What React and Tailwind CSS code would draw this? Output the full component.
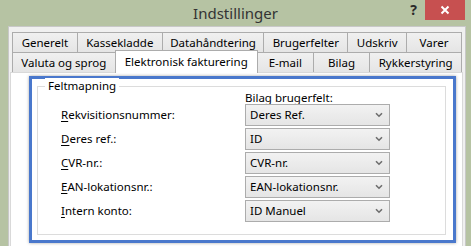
import React from 'react';

const font = { fontFamily: '"Noto Sans", "Open Sans", sans-serif' };

const row1 = [
  { label: 'Generelt', w: 'w-[66px]' },
  { label: 'Kassekladde', w: 'w-[86px]' },
  { label: 'Datahåndtering', w: 'w-[103px]' },
  { label: 'Brugerfelter', w: 'w-[85px]' },
  { label: 'Udskriv', w: 'w-[60px]' },
  { label: 'Varer', w: 'w-[56px]' },
];

const fields = [
  { key: 'R', rest: 'ekvisitionsnummer:', value: 'Deres Ref.' },
  { key: 'D', rest: 'eres ref.:', value: 'ID' },
  { key: 'C', rest: 'VR-nr.:', value: 'CVR-nr.' },
  { key: 'E', rest: 'AN-lokationsnr.:', value: 'EAN-lokationsnr.' },
  { key: 'I', rest: 'ntern konto:', value: 'ID Manuel' },
];

const Tab = ({ label, w }) => (
  <div
    className={`${w} h-[20px] -ml-px first:ml-0 border border-b-0 border-[#acacac] bg-gradient-to-b from-[#f0f0f0] to-[#e5e5e5] flex items-center justify-center text-[11.5px] text-black`}
  >
    {label}
  </div>
);

const Select = ({ value }) => (
  <div className="h-[22px] w-[145px] border border-[#acacac] bg-gradient-to-b from-[#f2f2f2] to-[#e5e5e5] flex items-center justify-between pl-[4px] pr-[6px] text-[11.5px] text-black">
    <span>{value}</span>
    <svg width="8" height="6" viewBox="0 0 8 6">
      <path d="M1 1.2 L4 4.2 L7 1.2" fill="none" stroke="#6d6d6d" strokeWidth="1.6" />
    </svg>
  </div>
);

export default function App() {
  return (
    <div className="w-[471px] h-[246px] bg-[#b6c3a3] flex flex-col overflow-hidden" style={font}>
      {/* Title bar */}
      <div className="h-[26px] grid grid-cols-[1fr_auto_1fr] items-start">
        <div />
        <div className="pt-[2px] text-[15px] text-[#333] leading-[22px]">Indstillinger</div>
        <div className="flex justify-end items-start pr-[6px]">
          <span className="mt-[2px] mr-[8px] text-[14px] font-bold text-[#2a2a2a] leading-[16px]">?</span>
          <div className="w-[40px] h-[20px] bg-[#c75050] flex items-center justify-center">
            <svg width="10" height="10" viewBox="0 0 10 10">
              <path d="M1.5 1.5 L8.5 8.5 M8.5 1.5 L1.5 8.5" stroke="#fff" strokeWidth="2" />
            </svg>
          </div>
        </div>
      </div>

      {/* Window body */}
      <div className="flex-1 ml-[8px] mr-[5px] bg-[#f0f0f0] border-l border-t border-r border-[#c8c8c8] pl-[1px] pt-[5px] pr-[2px] flex flex-col">
        <div className="pl-[2px] pr-[1px]">
          <div className="flex">
            {row1.map((t) => (
              <Tab key={t.label} {...t} />
            ))}
          </div>
          <div className="flex items-end h-[20px]">
            <Tab label="Valuta og sprog" w="w-[104px]" />
            <div className="relative z-10 -ml-px w-[144px] h-[23px] -mb-px border border-b-0 border-[#acacac] bg-white flex items-start justify-center pt-[2px] text-[11.5px] text-black">
              Elektronisk fakturering
            </div>
            <Tab label="E-mail" w="w-[57px]" />
            <Tab label="Bilag" w="w-[58px]" />
            <Tab label="Rykkerstyring" w="w-[93px]" />
          </div>
        </div>

        {/* Tab panel */}
        <div className="flex-1 bg-white border border-b-0 border-[#d9d9d9] pl-[18px] pr-[6px] pt-[3px]">
          <div className="h-[167px] border-[3px] border-[#4a78cc] shadow-[0_0_3px_rgba(0,0,0,0.35)] pl-[5px] pr-[7px] pt-[7px] pb-[5px] bg-white">
            <div className="relative h-full border border-[#dcdcdc] pl-[23px] pt-[4px] text-[11.5px] text-black">
              <span className="absolute -top-[9px] left-[7px] bg-white px-[3px] leading-[16px]">
                Feltmapning
              </span>
              <div className="ml-[184px] h-[13px] leading-[13px]">Bilag brugerfelt:</div>
              <div className="grid grid-cols-[184px_145px] gap-y-[2px]">
                {fields.map((f) => (
                  <React.Fragment key={f.key}>
                    <div className="h-[22px] flex items-center">
                      <span>
                        <span className="underline underline-offset-[2px]">{f.key}</span>
                        {f.rest}
                      </span>
                    </div>
                    <Select value={f.value} />
                  </React.Fragment>
                ))}
              </div>
            </div>
          </div>
        </div>
      </div>
    </div>
  );
}
